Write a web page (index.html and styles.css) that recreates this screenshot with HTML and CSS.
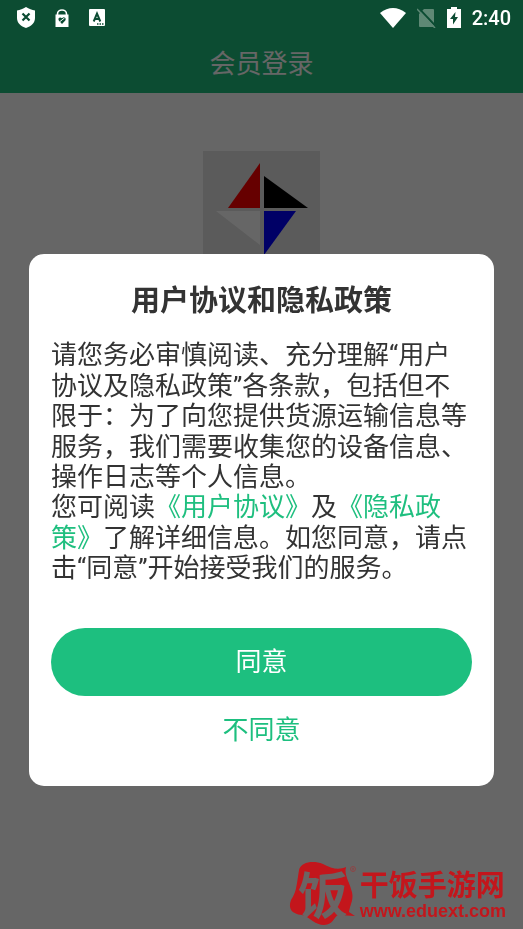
FILE: index.html
```html
<!DOCTYPE html>
<html lang="zh-CN">
<head>
<meta charset="utf-8">
<meta name="viewport" content="width=device-width, initial-scale=1">
<title>会员登录</title>
<link rel="stylesheet" href="styles.css">
</head>
<body>
<div class="screen">
  <header class="page-header"><h1 class="page-title">会员登录</h1></header>
  <main class="login">
    <svg class="brand" viewBox="0 0 117 117" role="img" aria-label="logo">
      <rect width="117" height="117" fill="#e3e3e3"/>
      <path d="M57 12V57H25Z" fill="#ff0000"/>
      <path d="M61 25L105 57H61Z" fill="#000"/>
      <path d="M13 60H57V94Z" fill="#fff"/>
      <path d="M61 60H93L61 104Z" fill="#0000ff"/>
    </svg>
  </main>
</div>

<div class="overlay">
  <div class="status-bar">
    <div class="status-group notices">
      <svg width="18" height="21" viewBox="0 0 18 21" aria-hidden="true">
        <path d="M9 0C6 2 3 3 0 3.500V11C0 16 4 19.500 9 21C14 19.500 18 16 18 11V3.500C15 3 12 2 9 0Z" fill="#fff"/>
        <path d="M5.500 6.500L12.500 13.500M12.500 6.500L5.500 13.500" stroke="#0c4c33" stroke-width="2.200"/>
      </svg>
      <svg width="14" height="18" viewBox="0 0 14 18" aria-hidden="true">
        <path d="M2.500 6V5A4.500 4 0 0 1 11.500 5V6" fill="none" stroke="#fff" stroke-width="1.600"/>
        <path d="M0.500 5.500H13.500V18H0.500Z" fill="#fff"/>
        <path d="M7 15L3.800 11.500C2.500 9 5 7.500 7 9.200C9 7.200 11.800 9 10.300 11.500Z" fill="#0c4c33"/>
        <path d="M5 12.500L9.500 9" stroke="#fff" stroke-width="1"/>
      </svg>
      <svg width="16" height="17" viewBox="0 0 16 17" aria-hidden="true">
        <rect width="16" height="17" rx="1" fill="#fff"/>
        <path d="M4.700 12.500L8 4.500L11.300 12.500M5.700 10H10.300" fill="none" stroke="#0c4c33" stroke-width="2"/>
        <path d="M8 15H14.500" stroke="#0c4c33" stroke-width="1.500" stroke-dasharray="1.500 1"/>
      </svg>
    </div>
    <div class="status-group signals">
      <svg width="26" height="20" viewBox="0 0 26 20" aria-hidden="true">
        <path d="M0 5Q13 -5 26 5L13 20Z" fill="#fff"/>
      </svg>
      <svg width="19" height="20" viewBox="0 0 19 20" aria-hidden="true">
        <path d="M7 1H16Q17 1 17 2V19H3Q2 19 2 18V6Z" fill="#5f8875"/>
        <path d="M1.500 0L19 18.500" stroke="#0c4c33" stroke-width="2"/>
        <path d="M0 1L18 20" stroke="#5f8875" stroke-width="1.500"/>
      </svg>
      <svg width="14" height="21" viewBox="0 0 14 21" aria-hidden="true">
        <path d="M4 0H10V2H14V21H0V2H4Z" fill="#fff"/>
        <path d="M8.500 5L3 12H6V17.500L11 10H8Z" fill="#0c4c33"/>
      </svg>
      <span class="clock">2:40</span>
    </div>
  </div>

  <section class="dialog" role="dialog" aria-modal="true" aria-labelledby="dialog-title">
    <h2 class="dialog-title" id="dialog-title">用户协议和隐私政策</h2>
    <div class="dialog-text">
      <p>请您务必审慎阅读、充分理解“用户协议及隐私政策”各条款，包括但不限于：为了向您提供货源运输信息等服务，我们需要收集您的设备信息、操作日志等个人信息。</p>
      <p>您可阅读<a href="#terms">《用户协议》</a>及<a href="#privacy">《隐私政策》</a>了解详细信息。如您同意，请点击“同意”开始接受我们的服务。</p>
    </div>
    <button class="button primary" type="button">同意</button>
    <button class="button plain" type="button">不同意</button>
  </section>

  <div class="watermark">
    <svg class="watermark-mark" width="72" height="68" viewBox="0 0 72 68" role="img" aria-label="饭">
      <path d="M11 9C13 1 25 -1 35 3C44 8 51 9 58 6C56 14 61 20 63 28C67 38 62 43 61 51L67 55L50 54C45 57 46 63 36 64C27 64 23 57 14 54C3 53 0 47 3 39C8 31 8 27 9 22Z" fill="#c3161c"/>
      <text class="watermark-glyph" x="10" y="53">饭</text>
      <circle cx="65" cy="8" r="2.500" fill="none" stroke="#8c4546"/>
      <path d="M64.500 9.500V7H65.500V8.200H64.500M65.500 8.200V9.500" fill="none" stroke="#8c4546" stroke-width=".6"/>
    </svg>
    <div class="watermark-words">
      <span class="watermark-name">干饭手游网</span>
      <span class="watermark-url">www.eduext.com</span>
    </div>
  </div>
</div>
</body>
</html>
```
FILE: styles.css
```css
* {
  box-sizing: border-box;
}

body {
  margin: 0;
  background: #fff;
  color: #333;
  font-family: Roboto, "Noto Sans CJK SC", sans-serif;
  font-size: 26px;
  text-spacing-trim: space-all;
}

h1,
h2,
p {
  margin: 0;
}

.screen {
  min-height: 100vh;
}

.page-header {
  padding: 44px 16px 9px;
  background: #1fbe7e;
  color: #fff;
  text-align: center;
}

.page-title {
  font-size: 26px;
  font-weight: 400;
  line-height: 40px;
}

.login {
  display: flex;
  justify-content: center;
  padding-top: 58px;
}

.brand {
  width: 117px;
}

.overlay {
  position: fixed;
  inset: 0;
  display: flex;
  flex-direction: column;
  justify-content: space-between;
  background: rgba(0, 0, 0, 0.6);
}

.status-bar {
  display: flex;
  align-items: center;
  justify-content: space-between;
  height: 35px;
  padding: 0 12px 0 17px;
}

.status-group {
  display: flex;
  align-items: center;
}

.notices {
  gap: 20px;
}

.signals {
  gap: 11px;
}

.clock {
  color: #fff;
  font-size: 20px;
  font-weight: 500;
  line-height: 24px;
}

.dialog {
  margin: 144px 29px 0;
  padding: 25px 22px 22px;
  border-radius: 15px;
  background: #fff;
}

.dialog-title {
  margin-bottom: 17px;
  font-size: 29px;
  font-weight: 700;
  line-height: 44px;
  text-align: center;
}

.dialog-text {
  margin-bottom: 44px;
  line-height: 1.173;
}

.dialog-text a {
  color: #1fbf7f;
  text-decoration: none;
}

.button {
  display: block;
  width: 100%;
  height: 68px;
  padding: 0 0 4px;
  border: 0;
  border-radius: 34px;
  background: none;
  font: inherit;
}

.primary {
  background: #1dbf7f;
  color: #fff;
}

.plain {
  color: #1dbf7f;
}

.watermark {
  display: flex;
  align-self: flex-end;
  align-items: flex-start;
  padding-right: 17px;
}

.watermark-mark {
  overflow: visible;
}

.watermark-glyph {
  fill: #6b6464;
  font-family: "Noto Sans CJK SC", sans-serif;
  font-size: 50px;
  font-weight: 700;
}

.watermark-words {
  display: flex;
  flex-direction: column;
  padding-top: 9px;
  color: #c3161c;
}

.watermark-name {
  font-size: 29px;
  font-weight: 700;
  line-height: 32px;
}

.watermark-url {
  font-family: "Liberation Sans", sans-serif;
  font-size: 18px;
  font-weight: 700;
  line-height: 18px;
}
```
